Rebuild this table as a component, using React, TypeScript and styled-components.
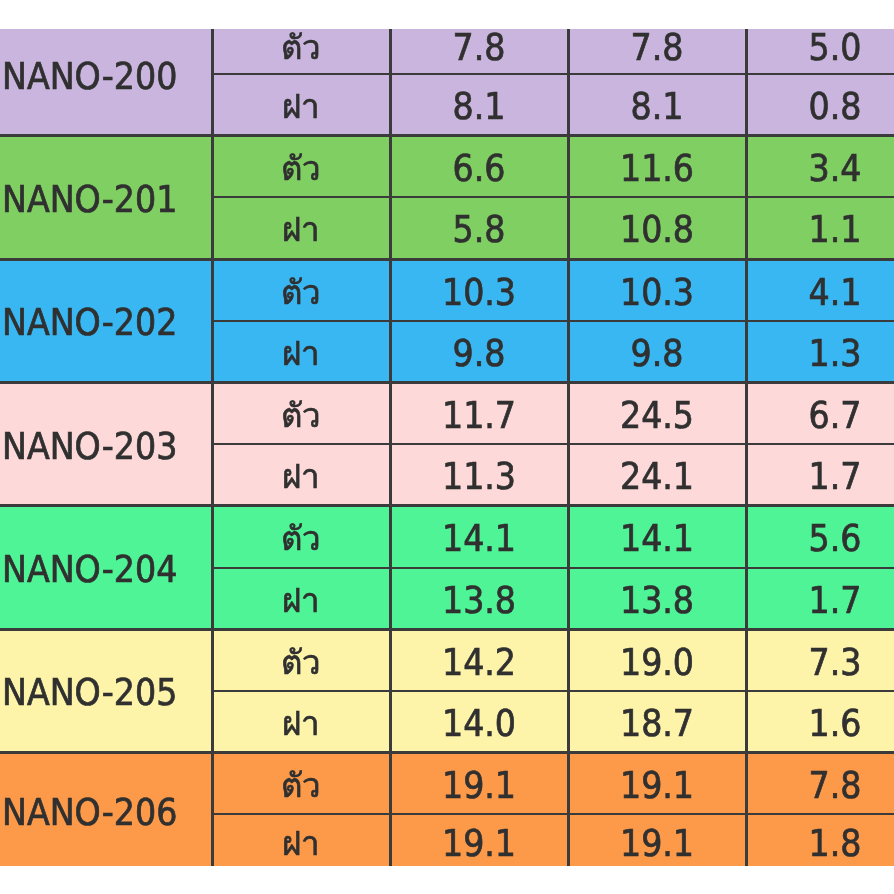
import React from 'react';
import styled, { createGlobalStyle } from 'styled-components';

type Part = { label: string; values: string[] };
type Model = { name: string; color: string; parts: Part[] };
type RowSize = 'top' | 'bottom' | 'full';

const models: Model[] = [
  {
    name: 'NANO-200',
    color: '#c9b5dd',
    parts: [
      { label: 'ตัว', values: ['7.8', '7.8', '5.0'] },
      { label: 'ฝา', values: ['8.1', '8.1', '0.8'] },
    ],
  },
  {
    name: 'NANO-201',
    color: '#7fcf63',
    parts: [
      { label: 'ตัว', values: ['6.6', '11.6', '3.4'] },
      { label: 'ฝา', values: ['5.8', '10.8', '1.1'] },
    ],
  },
  {
    name: 'NANO-202',
    color: '#39b7f2',
    parts: [
      { label: 'ตัว', values: ['10.3', '10.3', '4.1'] },
      { label: 'ฝา', values: ['9.8', '9.8', '1.3'] },
    ],
  },
  {
    name: 'NANO-203',
    color: '#fdd9d9',
    parts: [
      { label: 'ตัว', values: ['11.7', '24.5', '6.7'] },
      { label: 'ฝา', values: ['11.3', '24.1', '1.7'] },
    ],
  },
  {
    name: 'NANO-204',
    color: '#4ef495',
    parts: [
      { label: 'ตัว', values: ['14.1', '14.1', '5.6'] },
      { label: 'ฝา', values: ['13.8', '13.8', '1.7'] },
    ],
  },
  {
    name: 'NANO-205',
    color: '#fdf4aa',
    parts: [
      { label: 'ตัว', values: ['14.2', '19.0', '7.3'] },
      { label: 'ฝา', values: ['14.0', '18.7', '1.6'] },
    ],
  },
  {
    name: 'NANO-206',
    color: '#fd9a49',
    parts: [
      { label: 'ตัว', values: ['19.1', '19.1', '7.8'] },
      { label: 'ฝา', values: ['19.1', '19.1', '1.8'] },
    ],
  },
];

// the screenshot only shows part of the first and last rows
const rowSize = (groupIdx: number, partIdx: number): RowSize => {
  if (groupIdx === 0 && partIdx === 0) return 'top';
  if (groupIdx === models.length - 1 && partIdx === 1) return 'bottom';
  return 'full';
};

const GlobalStyle = createGlobalStyle`
  html, body {
    margin: 0;
    padding: 0;
    background: #fff;
  }
`;

const App = () => {
  return (
    <>
      <GlobalStyle />
      <Frame>
        <SizeTable>
          <colgroup>
            <Col $width={212} />
            <Col $width={178} />
            <Col $width={178} />
            <Col $width={178} />
            <Col $width={178} />
          </colgroup>
          <tbody>
            {models.map((model, g) =>
              model.parts.map((part, i) => (
                <Row
                  key={model.name + part.label}
                  $color={model.color}
                  $first={i === 0}
                  $size={rowSize(g, i)}
                >
                  {i === 0 && (
                    <ModelCell rowSpan={model.parts.length} $lift={g === 0}>
                      {model.name}
                    </ModelCell>
                  )}
                  <PartCell>{part.label}</PartCell>
                  {part.values.map((value, j) => (
                    <ValueCell key={j}>{value}</ValueCell>
                  ))}
                </Row>
              ))
            )}
          </tbody>
        </SizeTable>
      </Frame>
    </>
  );
};

export default App;

const rowHeights: Record<RowSize, string> = {
  top: '45px',
  bottom: '52px',
  full: '61.7px',
};

const rowPadding: Record<RowSize, string> = {
  top: '0 0 7px',
  bottom: '6px 0 0',
  full: '4px 0 0',
};

const Frame = styled.div`
  margin-top: 29px;
  width: 894px;
  overflow-x: clip;
`;

const SizeTable = styled.table`
  width: 924px;
  table-layout: fixed;
  border-collapse: collapse;
  font-family: 'DejaVu Sans Condensed', 'DejaVu Sans', 'Noto Sans', sans-serif;
  font-stretch: condensed;
  font-size: 37px;
  line-height: 1;
  color: #303030;
  -webkit-text-stroke: 0.7px #303030;
  filter: blur(0.5px);
`;

const Col = styled.col<{ $width: number }>`
  width: ${(p) => p.$width}px;
`;

const Row = styled.tr<{ $color: string; $first: boolean; $size: RowSize }>`
  height: ${(p) => rowHeights[p.$size]};
  background: ${(p) => p.$color};
  border-top: ${(p) => (p.$first ? '3px' : '2px')} solid #3b3b3b;

  &:first-child {
    border-top: 0;
  }

  & > td {
    padding: ${(p) => rowPadding[p.$size]};
  }
`;

const ModelCell = styled.td<{ $lift: boolean }>`
  text-align: left;
  border-right: 3px solid #3b3b3b;
  white-space: nowrap;

  && {
    padding: ${(p) => (p.$lift ? '0 0 10px 2px' : '4px 0 0 2px')};
  }
`;

const PartCell = styled.td`
  text-align: center;
  border-right: 3px solid #3b3b3b;
  font-size: 33px;
`;

const ValueCell = styled.td`
  text-align: center;
  border-right: 3px solid #3b3b3b;
`;
